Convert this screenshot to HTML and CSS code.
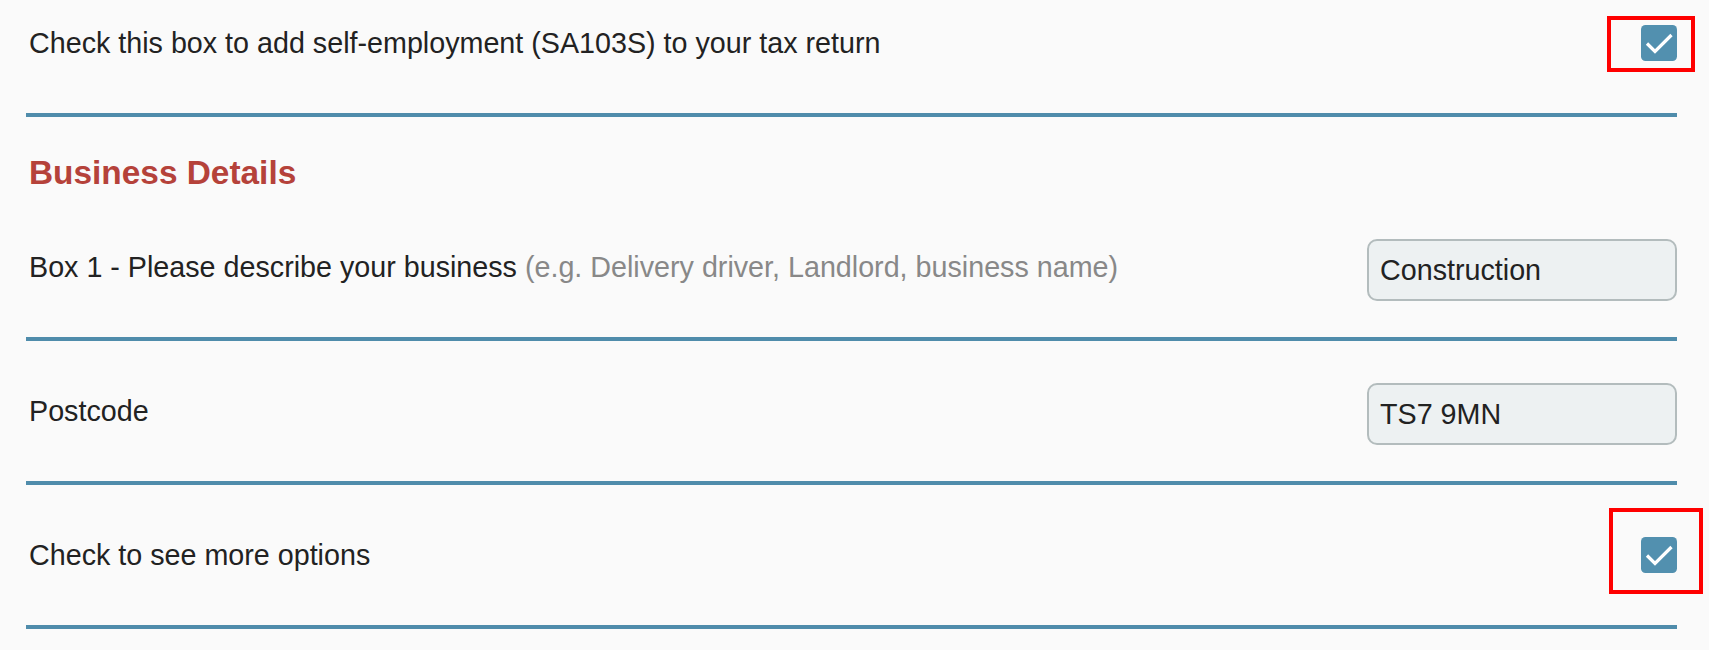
FILE: index.html
```html
<!DOCTYPE html>
<html lang="en">
<head>
<meta charset="utf-8">
<title>Self-employment</title>
<link rel="stylesheet" href="styles.css">
</head>
<body>
<div class="form">
  <div class="row row-first">
    <span class="label">Check this box to add self-employment (SA103S) to your tax return</span>
    <span class="check">
      <span class="mark mark-a"></span>
      <svg class="box" viewBox="0 0 36 36" width="36" height="36"><rect width="36" height="36" rx="4.5" fill="#5290af"/><path d="M6 18.5 L14 26.5 L30.5 10" fill="none" stroke="#fff" stroke-width="3.2"/></svg>
    </span>
  </div>
  <h2 class="heading">Business Details</h2>
  <div class="row row-box1">
    <span class="label">Box 1 - Please describe your business <span class="hint">(e.g. Delivery driver, Landlord, business name)</span></span>
    <input class="field" type="text" value="Construction">
  </div>
  <div class="row row-postcode">
    <span class="label">Postcode</span>
    <input class="field" type="text" value="TS7 9MN">
  </div>
  <div class="row row-more">
    <span class="label">Check to see more options</span>
    <span class="check">
      <span class="mark mark-b"></span>
      <svg class="box" viewBox="0 0 36 36" width="36" height="36"><rect width="36" height="36" rx="4.5" fill="#5290af"/><path d="M6 18.5 L14 26.5 L30.5 10" fill="none" stroke="#fff" stroke-width="3.2"/></svg>
    </span>
  </div>
</div>
</body>
</html>
```
FILE: styles.css
```css
html, body {
  margin: 0;
  padding: 0;
  background: #fafafa;
}
body {
  font-family: "Liberation Sans", Arial, sans-serif;
  color: #222;
}
.form {
  margin-left: 26px;
  width: 1651px;
}
.row {
  display: flex;
  align-items: center;
  justify-content: space-between;
  border-bottom: 4px solid #4f8cab;
  font-size: 28.7px;
  line-height: 33px;
}
.label {
  padding-left: 3px;
}
.row-first { padding: 25px 0 52px; }
.row-box1 { padding: 47px 0 36px; }
.row-postcode { padding: 42px 0 36px; }
.row-more { padding: 52px 0 52px; }
.row-box1 .label,
.row-postcode .label { padding-bottom: 6px; }
.hint { color: #888; }
.heading {
  margin: 37px 0 0;
  padding-left: 3px;
  font-size: 33.4px;
  line-height: 38px;
  font-weight: bold;
  color: #b5423a;
}
.field {
  box-sizing: border-box;
  width: 310px;
  height: 62px;
  margin: 0;
  padding: 0 0 0 11px;
  border: 2px solid #b3bcbd;
  border-radius: 10px;
  background: #edf1f2;
  font-family: "Liberation Sans", Arial, sans-serif;
  font-size: 28.7px;
  color: #222;
  outline: none;
}
.check {
  position: relative;
  display: block;
  width: 36px;
  height: 36px;
}
.box { display: block; }
.mark {
  position: absolute;
  box-sizing: border-box;
  border: 4px solid #f00;
}
.mark-a { left: -34px; top: -9px; width: 88px; height: 56px; }
.mark-b { left: -32px; top: -29px; width: 94px; height: 86px; }
```
